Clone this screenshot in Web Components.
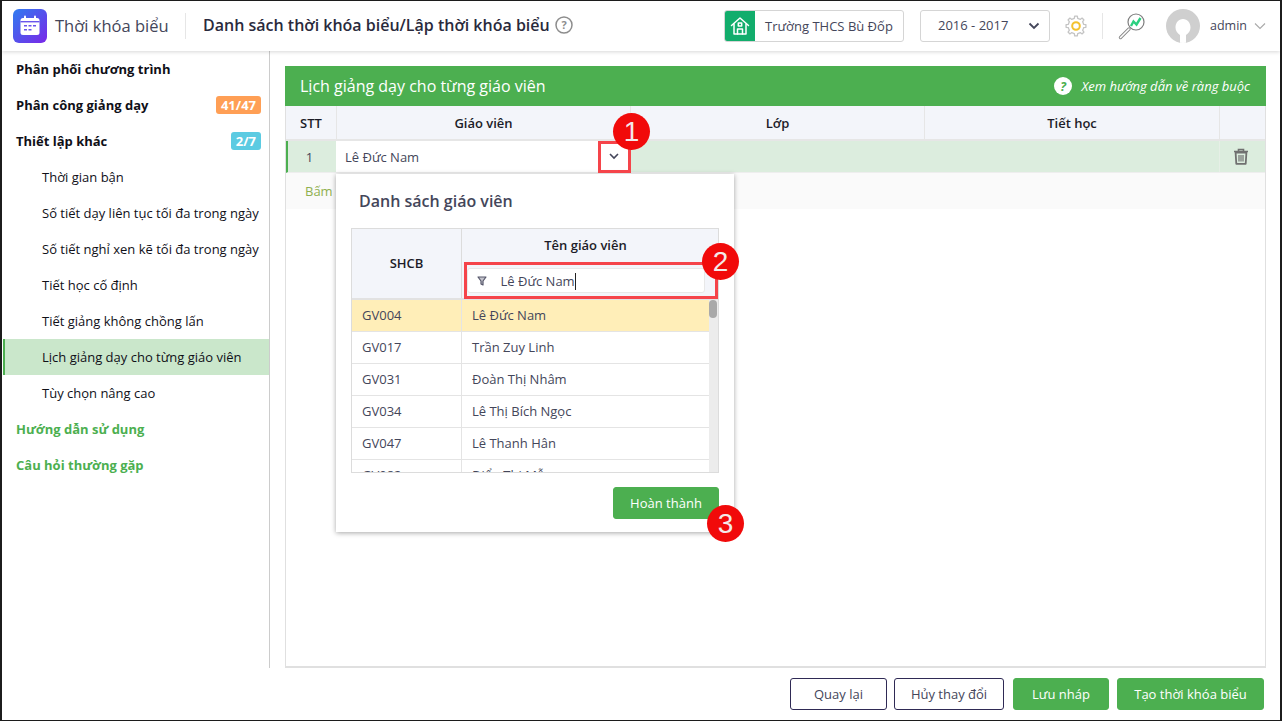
<!DOCTYPE html>
<html lang="vi">
<head>
<meta charset="utf-8">
<title>Thời khóa biểu</title>
<style>
    html, body { margin: 0; padding: 0; background: #fff; }
    body { font-family: "Open Sans", "Liberation Sans", sans-serif; font-size: 13px; color: #2b2b3a; }
</style>
</head>
<body>

<app-shell>
    <app-header slot="header"></app-header>
    <side-nav slot="nav">
        <nav-item kind="head">Phân phối chương trình</nav-item>
        <nav-item kind="head" badge="41/47" tone="#ff9f55">Phân công giảng dạy</nav-item>
        <nav-item kind="head" badge="2/7" tone="#5ccbe2">Thiết lập khác</nav-item>
        <nav-item>Thời gian bận</nav-item>
        <nav-item>Số tiết dạy liên tục tối đa trong ngày</nav-item>
        <nav-item>Số tiết nghỉ xen kẽ tối đa trong ngày</nav-item>
        <nav-item>Tiết học cố định</nav-item>
        <nav-item>Tiết giảng không chồng lấn</nav-item>
        <nav-item active>Lịch giảng dạy cho từng giáo viên</nav-item>
        <nav-item>Tùy chọn nâng cao</nav-item>
        <nav-item kind="link">Hướng dẫn sử dụng</nav-item>
        <nav-item kind="link">Câu hỏi thường gặp</nav-item>
    </side-nav>
    <schedule-panel slot="main"></schedule-panel>
    <app-footer slot="footer"></app-footer>
</app-shell>

<script>
// cog outline for the settings icon
function gearPath(cx, cy, outer, inner, teeth) {
    const step = Math.PI * 2 / teeth
    const pts = []
    for (let i = 0; i < teeth; i++) {
        const a = i * step
        const list = [[inner, a - step * .5], [inner, a - step * .28], [outer, a - step * .17], [outer, a + step * .17], [inner, a + step * .28]]
        list.forEach(p => pts.push((cx + p[0] * Math.cos(p[1])).toFixed(2) + ' ' + (cy + p[0] * Math.sin(p[1])).toFixed(2)))
    }
    return 'M' + pts.join('L') + 'Z'
}

class AppShell extends HTMLElement {
    constructor() {
        super()
        this.attachShadow({ mode: 'open' }).innerHTML = `
    <style>
        :host {
            display: grid;
            grid-template-columns: 268px 1fr;
            grid-template-rows: 50px 1fr 52px;
            width: 1282px;
            height: 721px;
            box-sizing: border-box;
            border: 1px solid #1c1c1c;
            border-left-width: 2px;
            border-right-width: 2px;
            overflow: hidden;
            background: #fff;
        }
        .top { grid-column: 1 / 3; position: relative; z-index: 2; }
        .nav { border-right: 1px solid #ccc; min-height: 0; }
        .main { min-height: 0; min-width: 0; }
        .foot { grid-column: 1 / 3; }
    </style>
    <div class="top"><slot name="header"></slot></div>
    <div class="nav"><slot name="nav"></slot></div>
    <div class="main"><slot name="main"></slot></div>
    <div class="foot"><slot name="footer"></slot></div>`
    }
}

class AppHeader extends HTMLElement {
    constructor() {
        super()
        this.attachShadow({ mode: 'open' }).innerHTML = `
    <style>
        * { box-sizing: border-box; }
        :host {
            display: flex;
            align-items: center;
            height: 50px;
            padding-left: 11px;
            background: #fff;
            box-shadow: 0 1px 4px rgba(0, 0, 0, .16);
        }
        .logo { width: 34px; height: 34px; flex: none; display: block; }
        .app { margin-left: 8px; font-size: 16.5px; color: #44465a; width: 130px; white-space: nowrap; padding-bottom: 2px; }
        .sep { width: 1px; height: 26px; background: #e6e6e6; }
        .title { margin-left: 17px; font-size: 16px; font-weight: 600; color: #2a2a3c; white-space: nowrap; display: flex; align-items: center; gap: 5px; padding-bottom: 2px; }
        .right { margin-left: auto; display: flex; align-items: center; height: 100%; }
        .school { display: flex; align-items: stretch; width: 180px; height: 32px; border: 1px solid #d5d5d5; border-radius: 3px; overflow: hidden; }
        .school i { width: 31px; margin: -1px 0 -1px -1px; background: #12ad6c; display: flex; align-items: center; justify-content: center; }
        .school span { padding-left: 10px; line-height: 30px; font-size: 13px; color: #44465a; white-space: nowrap; }
        .year { margin-left: 16px; width: 130px; height: 32px; border: 1px solid #d5d5d5; border-radius: 3px; display: flex; align-items: center; justify-content: space-between; padding: 0 9px 2px 17px; font-size: 13px; color: #44465a; }
        .gear { margin-left: 15px; display: block; }
        .vsep { margin-left: 15px; width: 1px; height: 26px; background: #e6e6e6; }
        .lens { margin-left: 15px; display: block; }
        .avatar { margin-left: 20px; display: block; }
        .user { margin-left: 10px; font-size: 12.5px; color: #44465a; padding-bottom: 2px; }
        .caret { margin: 0 14px 0 7px; display: block; }
    </style>
    <svg class="logo" viewBox="0 0 34 34">
        <defs><linearGradient id="lg" x1="0" y1="0" x2="1" y2="1"><stop offset="0" stop-color="#2f7cf0"/><stop offset="1" stop-color="#7a27e8"/></linearGradient></defs>
        <rect width="34" height="34" rx="6" fill="url(#lg)"/>
        <rect x="7.500" y="9" width="19" height="17" rx="2.500" fill="#fff"/>
        <rect x="11" y="6.500" width="2" height="4" rx="1" fill="#fff"/><rect x="21" y="6.500" width="2" height="4" rx="1" fill="#fff"/>
        <rect x="7.500" y="12" width="19" height="1.400" fill="#6a55ec"/>
        <g fill="#6a55ec"><rect x="11" y="16" width="3" height="1.500"/><rect x="15.500" y="16" width="3" height="1.500"/><rect x="20" y="16" width="3" height="1.500"/><rect x="11" y="20" width="3" height="1.500"/><rect x="15.500" y="20" width="3" height="1.500"/></g>
    </svg>
    <div class="app">Thời khóa biểu</div>
    <div class="sep"></div>
    <div class="title">Danh sách thời khóa biểu/Lập thời khóa biểu
        <svg width="18" height="18" viewBox="0 0 18 18"><circle cx="9" cy="9" r="8" fill="none" stroke="#8d8d8d" stroke-width="1.500"/><text x="9" y="13" text-anchor="middle" font-size="11" font-weight="700" font-family="Open Sans" fill="#8d8d8d">?</text></svg>
    </div>
    <div class="right">
        <div class="school">
            <i><svg width="20" height="20" viewBox="0 0 20 20" fill="none" stroke="#fff" stroke-width="1.500" stroke-linejoin="round" stroke-linecap="round"><path d="M1.500 9.500 10 2l8.500 7.500"/><path d="M4 8v10h12V8"/><path d="M7.500 18v-5h5v5"/><rect x="8.300" y="7" width="3.400" height="3"/></svg></i>
            <span>Trường THCS Bù Đốp</span>
        </div>
        <div class="year">2016 - 2017
            <svg width="12" height="8" viewBox="0 0 12 8" fill="none" stroke="#44465a" stroke-width="1.800" style="margin-top:2px"><path d="M1.500 1.500 6 6l4.500-4.500"/></svg>
        </div>
        <svg class="gear" width="22" height="22" viewBox="0 0 22 22">
            <path d="${gearPath(11, 11, 10, 7.8, 8)}" fill="none" stroke="#c4c4c4" stroke-width="1.300" stroke-linejoin="round"/>
            <circle cx="11" cy="11" r="3.800" fill="none" stroke="#f3c22f" stroke-width="2"/>
        </svg>
        <div class="vsep"></div>
        <svg class="lens" width="28" height="28" viewBox="0 0 28 28">
            <path d="M11 17 2.500 25.500" stroke="#8b8b8b" stroke-width="3.400" stroke-linecap="round"/>
            <path d="M11 17 2.500 25.500" stroke="#fff" stroke-width="1.500" stroke-linecap="round"/>
            <circle cx="18" cy="10" r="8" fill="#fff" stroke="#7d7d7d" stroke-width="1.200"/>
            <path d="M13 14l2.500-4.500 3 3L22.500 6" fill="none" stroke="#2bd07f" stroke-width="2.400"/>
        </svg>
        <svg class="avatar" width="34" height="34" viewBox="0 0 34 34">
            <clipPath id="av"><circle cx="17" cy="17" r="17"/></clipPath>
            <g clip-path="url(#av)"><rect width="34" height="34" fill="#cfcfcf"/>
            <path d="M17 10c4.500 0 7.500 4 7.500 8.500 0 3-1.800 5.500-4.500 7.500v8h-6v-8c-2.700-2-4.500-4.500-4.500-7.500C9.500 14 12.500 10 17 10z" fill="#fff"/></g>
        </svg>
        <div class="user">admin</div>
        <svg class="caret" width="12" height="8" viewBox="0 0 12 8" fill="none" stroke="#a9a9a9" stroke-width="1.100"><path d="M1 1.500 6 6.500l5-5"/></svg>
    </div>`
    }
}

class SideNav extends HTMLElement {
    constructor() {
        super()
        this.attachShadow({ mode: 'open' }).innerHTML = `
    <style>
        :host { display: flex; flex-direction: column; background: #fff; }
    </style>
    <slot></slot>`
    }
}

class NavItem extends HTMLElement {
    constructor() {
        super()
        const kind = this.getAttribute('kind') || 'sub'
        const badge = this.getAttribute('badge')
        const tone = this.getAttribute('tone') || '#999'
        const active = this.hasAttribute('active')
        const colour = kind === 'link' ? '#4caf50' : '#101018'
        this.attachShadow({ mode: 'open' }).innerHTML = `
    <style>
        :host {
            display: flex;
            align-items: center;
            justify-content: space-between;
            height: 36px;
            box-sizing: border-box;
            padding: 0 8px 0 ${kind === 'sub' ? 40 : 14}px;
            font-size: 13px;
            font-weight: ${kind === 'sub' ? 400 : 700};
            color: ${colour};
            white-space: nowrap;
            background: ${active ? '#cae7cb' : 'transparent'};
            border-left: ${active ? '2px solid #4caf50' : '0'};
            ${active ? 'padding-left: 37px; margin-left: 1px;' : ''}
        }
        b {
            display: block;
            padding: 0 5px;
            height: 18px;
            line-height: 18px;
            border-radius: 3px;
            background: ${tone};
            color: #fff;
            font-size: 13px;
            font-weight: 700;
        }
    </style>
    <span><slot></slot></span>
    ${badge ? `<b>${badge}</b>` : ''}`
    }
}

class SchedulePanel extends HTMLElement {
    constructor() {
        super()
        this.attachShadow({ mode: 'open' }).innerHTML = `
    <style>
        * { box-sizing: border-box; }
        :host { display: block; box-sizing: border-box; height: 100%; padding: 15px 14px 0 15px; background: #fff; position: relative; }
        .panel { height: 100%; border: 1px solid #e0e0e0; border-top: 0; border-bottom-width: 2px; display: flex; flex-direction: column; }
        .bar {
            margin: 0 -1px;
            height: 40px;
            flex: none;
            background: #4caf50;
            color: #fff;
            display: flex;
            align-items: center;
            justify-content: space-between;
            padding: 0 16px 0 15px;
            font-size: 16px;
        }
        .bar span { padding-bottom: 1px; }
        .bar em { display: flex; align-items: center; gap: 10px; font-size: 13px; }
        .row { display: grid; grid-template-columns: 51px 294px 294px 295px 1fr; flex: none; }
        .head { height: 35px; background: #f3f5fa; border-bottom: 2px solid #e6e6e6; font-size: 13px; font-weight: 600; color: #1c1c28; }
        .head div { display: flex; align-items: center; justify-content: center; border-right: 1px solid #e6e6e6; }
        .head div:last-child { border-right: 0; }
        .data { height: 32px; background: #dcedde; border-left: 2px solid #4caf50; grid-template-columns: 48px 294px 294px 295px 1fr; border-bottom: 1px solid #eee; }
        .data > div { display: flex; align-items: center; justify-content: center; font-size: 13px; }
        .data .num { color: #44465a; padding-right: 5px; }
        .data .pick { background: #fff; justify-content: space-between; padding: 0 11px 0 9px; color: #44465a; }
        .data .bin { border-left: 1px solid #e6efe6; padding-right: 4px; }
        .add { height: 36px; flex: none; background: #fafafa; color: #8fb04f; font-size: 13px; padding: 0 19px; display: flex; align-items: center; }
        call-out-box[n="1"] { left: 328px; top: 90px; width: 33px; height: 32px; }
        call-out-box[n="2"] { left: 194px; top: 211px; width: 254px; height: 37px; }
        call-out-dot[n="1"] { left: 343px; top: 62px; }
        call-out-dot[n="2"] { left: 432px; top: 192px; }
        call-out-dot[n="3"] { left: 437px; top: 454px; }
        teacher-dialog { position: absolute; left: 66px; top: 123px; }
    </style>
    <div class="panel">
        <div class="bar">
            <span>Lịch giảng dạy cho từng giáo viên</span>
            <em>
                <svg width="18" height="18" viewBox="0 0 18 18"><circle cx="9" cy="9" r="9" fill="#fff"/><text x="9" y="13.500" text-anchor="middle" font-size="12.500" font-weight="700" font-family="Open Sans" fill="#4caf50">?</text></svg>
                Xem hướng dẫn về ràng buộc
            </em>
        </div>
        <div class="row head"><div>STT</div><div>Giáo viên</div><div>Lớp</div><div>Tiết học</div><div></div></div>
        <div class="row data">
            <div class="num">1</div>
            <div class="pick">Lê Đức Nam
                <svg width="10" height="7" viewBox="0 0 10 7" fill="none" stroke="#44465a" stroke-width="1.600"><path d="M1 1l4 4 4-4"/></svg>
            </div>
            <div></div><div></div>
            <div class="bin">
                <svg width="16" height="17" viewBox="0 0 16 17"><path d="M1 3.500h14M5.500 3V1.500h5V3" fill="none" stroke="#707070" stroke-width="1.600"/><path d="M2.600 4.500h10.800l-.7 11.300H3.300z" fill="none" stroke="#707070" stroke-width="1.800" stroke-linejoin="round"/><path d="M6 7v6.500M8 7v6.500M10 7v6.500" stroke="#707070" stroke-width="1.200"/></svg>
            </div>
        </div>
        <div class="add">Bấm</div>
    </div>
    <teacher-dialog></teacher-dialog>
    <call-out-box n="1"></call-out-box>
    <call-out-box n="2"></call-out-box>
    <call-out-dot n="1">1</call-out-dot>
    <call-out-dot n="2">2</call-out-dot>
    <call-out-dot n="3">3</call-out-dot>`
    }
}

class TeacherDialog extends HTMLElement {
    constructor() {
        super()
        const list = [
            ['GV004', 'Lê Đức Nam'],
            ['GV017', 'Trần Zuy Linh'],
            ['GV031', 'Đoàn Thị Nhâm'],
            ['GV034', 'Lê Thị Bích Ngọc'],
            ['GV047', 'Lê Thanh Hân'],
            ['GV082', 'Điểu Thị Mỗ']
        ]
        const rows = list.map((r, i) => `<div class="tr${i === 0 ? ' sel' : ''}"><div>${r[0]}</div><div>${r[1]}</div></div>`).join('')
        this.attachShadow({ mode: 'open' }).innerHTML = `
    <style>
        * { box-sizing: border-box; }
        :host {
            display: flex;
            flex-direction: column;
            box-sizing: border-box;
            width: 398px;
            height: 358px;
            padding: 0 15px;
            background: #fff;
            box-shadow: 0 1px 5px rgba(0, 0, 0, .35);
            color: #44465a;
        }
        h3 { margin: 0; padding: 16px 0 0 8px; height: 54px; font-size: 16px; font-weight: 600; color: #44465a; }
        .table { width: 368px; height: 245px; border: 1px solid #dcdcdc; display: flex; flex-direction: column; }
        .thead { display: grid; grid-template-columns: 110px 1fr; height: 71px; flex: none; background: #f3f5fa; border-bottom: 2px solid #e2e2e2; font-size: 13px; font-weight: 600; color: #1c1c28; }
        .thead > div:first-child { display: flex; align-items: center; justify-content: center; border-right: 1px solid #dcdcdc; padding-bottom: 2px; }
        .name { display: flex; flex-direction: column; align-items: center; padding: 7px 9px 0 0; }
        .filter { margin-top: 14px; width: 238px; height: 25px; flex: none; background: #fff; border: 1px solid #e8e8e8; border-radius: 3px; display: flex; align-items: center; padding: 1px 0 0 9px; font-weight: 400; color: #44465a; }
        .filter span { margin-left: 14px; border-right: 1px solid #222; line-height: 17px; }
        .body { flex: 1; display: flex; min-height: 0; overflow: hidden; }
        .rows { flex: 1; min-width: 0; }
        .tr { display: grid; grid-template-columns: 110px 1fr; height: 32px; border-bottom: 1px solid #e4e4e4; font-size: 13px; }
        .tr > div { display: flex; align-items: center; padding: 0 0 1px 10px; }
        .tr > div:first-child { border-right: 1px solid #e4e4e4; }
        .tr.sel { background: #ffeeb8; }
        .track { width: 9px; flex: none; background: #ececec; }
        .thumb { width: 8px; height: 18px; border-radius: 4px; background: #a9a9a9; }
        .foot { display: flex; justify-content: flex-end; margin-top: 14px; }
        action-button { width: 106px; }
    </style>
    <h3>Danh sách giáo viên</h3>
    <div class="table">
        <div class="thead">
            <div>SHCB</div>
            <div class="name">Tên giáo viên
                <div class="filter">
                    <svg width="10" height="10" viewBox="0 0 10 10"><path d="M1 1h8L6 5v4L4 8V5z" fill="#c4c4cc" stroke="#55566a" stroke-width="1.200" stroke-linejoin="round"/></svg>
                    <span>Lê Đức Nam</span>
                </div>
            </div>
        </div>
        <div class="body">
            <div class="rows">${rows}</div>
            <div class="track"><div class="thumb"></div></div>
        </div>
    </div>
    <div class="foot"><action-button primary>Hoàn thành</action-button></div>`
    }
}

class ActionButton extends HTMLElement {
    constructor() {
        super()
        const primary = this.hasAttribute('primary')
        this.attachShadow({ mode: 'open' }).innerHTML = `
    <style>
        :host {
            display: flex;
            align-items: center;
            justify-content: center;
            height: 32px;
            box-sizing: border-box;
            border-radius: 3px;
            font-size: 13px;
            white-space: nowrap;
            background: ${primary ? '#4caf50' : '#fff'};
            color: ${primary ? '#fff' : '#44465a'};
            border: 1px solid ${primary ? '#4caf50' : '#2f2a55'};
        }
    </style>
    <slot></slot>`
    }
}

class AppFooter extends HTMLElement {
    constructor() {
        super()
        this.attachShadow({ mode: 'open' }).innerHTML = `
    <style>
        :host { display: flex; justify-content: flex-end; align-items: flex-start; height: 52px; box-sizing: border-box; padding: 10px 16px 0 0; background: #fff; }
    </style>
    <action-button style="width:97px">Quay lại</action-button>
    <action-button style="width:110px;margin-left:7px">Hủy thay đổi</action-button>
    <action-button primary style="width:96px;margin-left:9px">Lưu nháp</action-button>
    <action-button primary style="width:147px;margin-left:8px">Tạo thời khóa biểu</action-button>`
    }
}

class CallOutBox extends HTMLElement {
    constructor() {
        super()
        this.attachShadow({ mode: 'open' }).innerHTML = `
    <style>
        :host { position: absolute; display: block; box-sizing: border-box; border: 3px solid #f5444a; }
    </style>`
    }
}

class CallOutDot extends HTMLElement {
    constructor() {
        super()
        this.attachShadow({ mode: 'open' }).innerHTML = `
    <style>
        :host {
            position: absolute;
            display: flex;
            align-items: center;
            justify-content: center;
            width: 37px;
            height: 37px;
            border-radius: 50%;
            background: #f10a0a;
            color: #f4e9e9;
            font-family: "Liberation Sans", sans-serif;
            font-size: 28px;
        }
    </style>
    <slot></slot>`
    }
}

customElements.define('app-shell', AppShell)
customElements.define('app-header', AppHeader)
customElements.define('side-nav', SideNav)
customElements.define('nav-item', NavItem)
customElements.define('schedule-panel', SchedulePanel)
customElements.define('teacher-dialog', TeacherDialog)
customElements.define('action-button', ActionButton)
customElements.define('app-footer', AppFooter)
customElements.define('call-out-box', CallOutBox)
customElements.define('call-out-dot', CallOutDot)
</script>
</body>
</html>
